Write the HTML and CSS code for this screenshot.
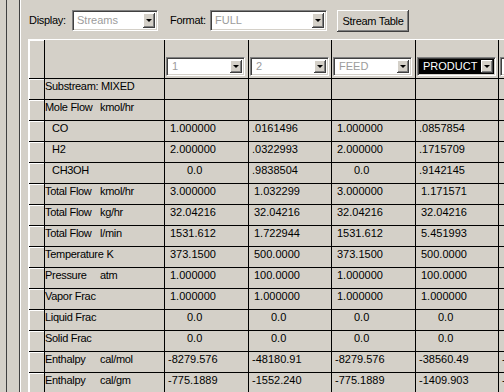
FILE: index.html
```html
<!DOCTYPE html>
<html lang="en">
<head>
    <meta charset="UTF-8">
    <meta name="viewport" content="width=device-width, initial-scale=1.0">
    <title>Stream Results</title>
    <link rel="stylesheet" href="styles.css">
</head>
<body>
    <div class="window">
        <div class="edge"></div>
        <div class="splitter"></div>

        <div class="pane">
            <div class="toolbar">
                <span class="label display-label">Display:</span>
                <div class="combo combo-display">
                    <span class="combo-text">Streams</span>
                    <span class="combo-btn"></span>
                </div>
                <span class="label format-label">Format:</span>
                <div class="combo combo-format">
                    <span class="combo-text">FULL</span>
                    <span class="combo-btn"></span>
                </div>
                <button class="btn">Stream Table</button>
            </div>

            <div class="grid">
                <!-- header row -->
                <div class="rh"></div>
                <div class="head"></div>
                <div class="head"><div class="combo combo-col"><span class="combo-text">1</span><span class="combo-btn"></span></div></div>
                <div class="head"><div class="combo combo-col"><span class="combo-text">2</span><span class="combo-btn"></span></div></div>
                <div class="head"><div class="combo combo-col"><span class="combo-text">FEED</span><span class="combo-btn"></span></div></div>
                <div class="head"><div class="combo combo-col selected"><span class="combo-text">PRODUCT</span><span class="combo-btn"></span></div></div>
                <div class="head"><div class="combo combo-col"><span class="combo-text"></span><span class="combo-btn"></span></div></div>

                <div class="rh"></div>
                <div class="lbl">Substream: MIXED</div>
                <div class="num"></div><div class="num"></div><div class="num"></div><div class="num"></div><div class="num"></div>

                <div class="rh"></div>
                <div class="lbl"><span class="nm">Mole Flow</span>kmol/hr</div>
                <div class="num"></div><div class="num"></div><div class="num"></div><div class="num"></div><div class="num"></div>

                <div class="rh"></div>
                <div class="lbl ind">CO</div>
                <div class="num">1.000000</div><div class="num dot">.0161496</div><div class="num">1.000000</div><div class="num dot">.0857854</div><div class="num"></div>

                <div class="rh"></div>
                <div class="lbl ind">H2</div>
                <div class="num">2.000000</div><div class="num dot">.0322993</div><div class="num">2.000000</div><div class="num dot">.1715709</div><div class="num"></div>

                <div class="rh"></div>
                <div class="lbl ind">CH3OH</div>
                <div class="num zero">0.0</div><div class="num dot">.9838504</div><div class="num zero">0.0</div><div class="num dot">.9142145</div><div class="num"></div>

                <div class="rh"></div>
                <div class="lbl"><span class="nm">Total Flow</span>kmol/hr</div>
                <div class="num">3.000000</div><div class="num">1.032299</div><div class="num">3.000000</div><div class="num">1.171571</div><div class="num"></div>

                <div class="rh"></div>
                <div class="lbl"><span class="nm">Total Flow</span>kg/hr</div>
                <div class="num">32.04216</div><div class="num">32.04216</div><div class="num">32.04216</div><div class="num">32.04216</div><div class="num"></div>

                <div class="rh"></div>
                <div class="lbl"><span class="nm">Total Flow</span>l/min</div>
                <div class="num">1531.612</div><div class="num">1.722944</div><div class="num">1531.612</div><div class="num">5.451993</div><div class="num"></div>

                <div class="rh"></div>
                <div class="lbl"><span class="nm">Temperature</span>K</div>
                <div class="num">373.1500</div><div class="num">500.0000</div><div class="num">373.1500</div><div class="num">500.0000</div><div class="num"></div>

                <div class="rh"></div>
                <div class="lbl"><span class="nm">Pressure</span>atm</div>
                <div class="num">1.000000</div><div class="num">100.0000</div><div class="num">1.000000</div><div class="num">100.0000</div><div class="num"></div>

                <div class="rh"></div>
                <div class="lbl">Vapor Frac</div>
                <div class="num">1.000000</div><div class="num">1.000000</div><div class="num">1.000000</div><div class="num">1.000000</div><div class="num"></div>

                <div class="rh"></div>
                <div class="lbl">Liquid Frac</div>
                <div class="num zero">0.0</div><div class="num zero">0.0</div><div class="num zero">0.0</div><div class="num zero">0.0</div><div class="num"></div>

                <div class="rh"></div>
                <div class="lbl">Solid Frac</div>
                <div class="num zero">0.0</div><div class="num zero">0.0</div><div class="num zero">0.0</div><div class="num zero">0.0</div><div class="num"></div>

                <div class="rh"></div>
                <div class="lbl"><span class="nm">Enthalpy</span>cal/mol</div>
                <div class="num dot">-8279.576</div><div class="num dot">-48180.91</div><div class="num dot">-8279.576</div><div class="num dot">-38560.49</div><div class="num dot">-</div>

                <div class="rh"></div>
                <div class="lbl"><span class="nm">Enthalpy</span>cal/gm</div>
                <div class="num dot">-775.1889</div><div class="num dot">-1552.240</div><div class="num dot">-775.1889</div><div class="num dot">-1409.903</div><div class="num dot">-</div>
            </div>
        </div>
    </div>
</body>
</html>
```

FILE: styles.css
```css
body {
    margin: 0;
    background-color: #d4d0c8;
    font-family: 'Liberation Sans', Arial, sans-serif;
    font-size: 11px;
    color: #000;
    overflow: hidden;
}

.window {
    display: flex;
    height: 392px;
    overflow: hidden;
}

.edge {
    width: 6px;
    flex: none;
}

.splitter {
    width: 12px;
    flex: none;
    border-left: 1px solid #404040;
    border-right: 1px solid #404040;
}

.pane {
    flex: 1;
    border-left: 1px solid #fff;
    padding-left: 7px;
    overflow: hidden;
}

/* top bar */
.toolbar {
    display: flex;
    align-items: flex-start;
    height: 22px;
    margin-top: 10px;
    margin-bottom: 7px;
}

.label {
    letter-spacing: -0.3px;
    line-height: 21px;
}

.display-label {
    width: 43px;
    padding-left: 1px;
}

.format-label {
    width: 40px;
    margin-left: 12px;
}

.combo {
    display: flex;
    box-sizing: border-box;
    height: 21px;
    padding: 2px;
    background: #fff;
    border: 1px solid;
    border-color: #808080 #fff #fff #808080;
    box-shadow: inset 1px 1px #404040, inset -1px -1px #d4d0c8;
}

.combo-display {
    width: 86px;
}

.combo-format {
    width: 117px;
}

.combo-text {
    flex: 1;
    color: #9c9c9c;
    padding-left: 2px;
    line-height: 15px;
    white-space: nowrap;
    overflow: hidden;
}

.combo-btn {
    width: 12px;
    flex: none;
    background: #d4d0c8;
    box-shadow: inset -1px -1px #404040, inset 1px 1px #fff, inset -2px -2px #808080;
    display: flex;
    align-items: center;
    justify-content: center;
}

.combo-btn::after {
    content: "";
    border-left: 3px solid transparent;
    border-right: 3px solid transparent;
    border-top: 3px solid #000;
}

.btn {
    margin-left: 10px;
    width: 72px;
    height: 22px;
    padding: 0;
    font-family: inherit;
    font-size: 11px;
    letter-spacing: -0.3px;
    color: #000;
    background: #d4d0c8;
    border: none;
    box-shadow: inset -1px -1px #404040, inset 1px 1px #fff, inset -2px -2px #808080;
}

/* stream grid */
.grid {
    display: grid;
    grid-template-columns: 15px 119px 83px 82px 83px 82px 60px;
    grid-template-rows: 38px repeat(15, 20px);
    gap: 1px;
    width: max-content;
    background: #000;
    border-top: 1px solid #fff;
    border-left: 1px solid #fff;
}

.grid > div {
    background: #d4d0c8;
    white-space: nowrap;
    overflow: hidden;
}

.grid > .rh {
    box-shadow: inset 1px 1px #fff;
}

.head {
    display: flex;
    align-items: flex-end;
    padding-bottom: 2px;
    box-sizing: border-box;
}

.combo-col {
    width: 79px;
    height: 19px;
    margin-left: 1px;
}

.combo-col .combo-text {
    line-height: 13px;
    padding-left: 3px;
}

.combo-col.selected {
    background: #000;
}

.combo-col.selected .combo-text {
    color: #fff;
}

.lbl {
    padding-top: 1px;
    line-height: 13px;
    letter-spacing: -0.3px;
}

.lbl.ind {
    padding-left: 7px;
}

.nm {
    display: inline-block;
    min-width: 55px;
    padding-right: 3px;
    box-sizing: border-box;
}

.num {
    padding-top: 1px;
    padding-left: 5px;
    line-height: 13px;
}

.num.dot {
    padding-left: 3px;
}

.num.zero {
    padding-left: 22px;
}
```
